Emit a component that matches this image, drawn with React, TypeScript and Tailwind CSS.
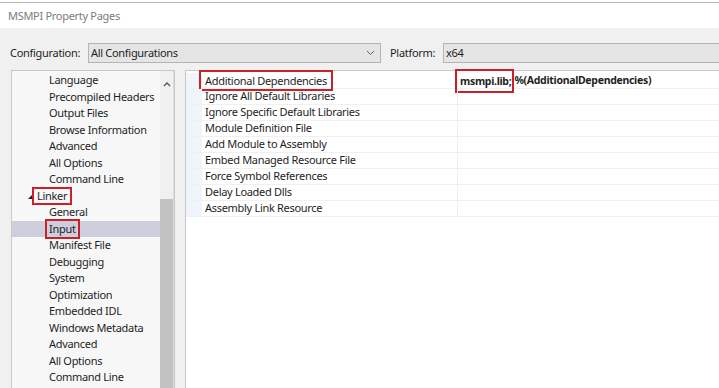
const treeItems: { label: string; level: number; selected?: boolean; boxed?: boolean; expander?: boolean }[] = [
  { label: "Language", level: 2 },
  { label: "Precompiled Headers", level: 2 },
  { label: "Output Files", level: 2 },
  { label: "Browse Information", level: 2 },
  { label: "Advanced", level: 2 },
  { label: "All Options", level: 2 },
  { label: "Command Line", level: 2 },
  { label: "Linker", level: 1, boxed: true, expander: true },
  { label: "General", level: 2 },
  { label: "Input", level: 2, selected: true, boxed: true },
  { label: "Manifest File", level: 2 },
  { label: "Debugging", level: 2 },
  { label: "System", level: 2 },
  { label: "Optimization", level: 2 },
  { label: "Embedded IDL", level: 2 },
  { label: "Windows Metadata", level: 2 },
  { label: "Advanced", level: 2 },
  { label: "All Options", level: 2 },
  { label: "Command Line", level: 2 },
];

const properties = [
  "Additional Dependencies",
  "Ignore All Default Libraries",
  "Ignore Specific Default Libraries",
  "Module Definition File",
  "Add Module to Assembly",
  "Embed Managed Resource File",
  "Force Symbol References",
  "Delay Loaded Dlls",
  "Assembly Link Resource",
];

const Chevron = () => (
  <svg width="9" height="6" viewBox="0 0 9 6" className="text-[#606060]">
    <path d="M1 1 L4.5 4.5 L8 1" fill="none" stroke="currentColor" strokeWidth="1" />
  </svg>
);

const App = () => {
  return (
    <div
      className="w-[719px] h-[388px] overflow-hidden bg-[#f0f0f0] flex flex-col text-[11px] tracking-[-0.3px] text-[#1e1e1e]"
      style={{ fontFamily: '"Noto Sans", "Open Sans", sans-serif' }}
    >
      <div className="h-[3px] bg-white border-b border-[#b8b8b8]" />
      <div className="h-[25px] bg-white flex items-center pl-[8px] pt-[2px] text-[#7c7c7c]">
        MSMPI Property Pages
      </div>

      {/* configuration row */}
      <div className="h-[42px] flex items-center pt-[8px]">
        <span className="ml-[10px] w-[78px] shrink-0 whitespace-nowrap">Configuration:</span>
        <div className="w-[293px] shrink-0 h-[20px] bg-[#e5e5e5] border border-[#b4b4b4] flex items-center justify-between pl-[2px] pr-[5px]">
          <span>All Configurations</span>
          <Chevron />
        </div>
        <span className="ml-[9px] w-[53px] shrink-0 whitespace-nowrap">Platform:</span>
        <div className="flex-1 h-[20px] bg-[#e5e5e5] border border-[#b4b4b4] border-r-0 flex items-center pl-[2px]">
          x64
        </div>
      </div>

      <div className="flex-1 flex min-h-0">
        {/* tree */}
        <div className="ml-[11px] w-[164px] bg-[#f7f7f7] border border-[#c8c8c8] border-b-0 flex min-h-0">
          <div className="flex-1 pt-[1px] min-w-0">
            {treeItems.map((it, i) => (
              <div
                key={i}
                className={`h-[16.5px] flex items-center ${it.selected ? "bg-[#cdcfdd]" : ""}`}
              >
                {it.level === 1 ? (
                  <div className="flex items-center pl-[16px]">
                    <svg width="4" height="4" viewBox="0 0 4 4" className="mt-[3px]">
                      <path d="M4 0 L4 4 L0 4 Z" fill="#1e1e1e" />
                    </svg>
                    <span className="whitespace-nowrap border-2 border-[#c9202a] px-[3px] leading-[14px]">
                      {it.label}
                    </span>
                  </div>
                ) : (
                  <div className="flex items-center pl-[37px]">
                    <span
                      className={`whitespace-nowrap leading-[16px] ${
                        it.boxed ? "border-2 border-[#c9202a] px-[2px] -ml-[4px] leading-[16px]" : ""
                      }`}
                    >
                      {it.label}
                    </span>
                  </div>
                )}
              </div>
            ))}
          </div>
          {/* scrollbar */}
          <div className="w-[14px] bg-[#f0f0f0] border-r border-[#dcdcdc] flex flex-col">
            <div className="h-[26px] flex items-center justify-center">
              <svg width="8" height="5" viewBox="0 0 8 5">
                <path d="M1 4 L4 1 L7 4" fill="none" stroke="#555" strokeWidth="1.4" />
              </svg>
            </div>
            <div className="h-[102px]" />
            <div className="flex-1 bg-[#c2c2c2]" />
          </div>
        </div>

        {/* property grid */}
        <div className="ml-[10px] flex-1 bg-white border-l border-t border-[#c8c8c8] pt-[2px]">
          {properties.map((p, i) => (
            <div key={i} className="h-[16px] flex border-b border-[#f0f0f0]">
              <div className="w-[16px] bg-[#f0f4fb]" />
              <div className="w-[256px] border-r border-[#f0f0f0] flex items-center pl-[3px] whitespace-nowrap">
                {i === 0 ? (
                  <span className="border-2 border-[#c9202a] px-[4px] -ml-[6px] leading-[17px]">{p}</span>
                ) : (
                  p
                )}
              </div>
              <div className="flex-1 flex items-center pl-[2px] font-bold text-[10.5px] whitespace-nowrap">
                {i === 0 && (
                  <>
                    <span className="border-2 border-[#c9202a] pl-[3px] pr-[1px] -ml-[5px] leading-[20px]">msmpi.lib;</span>
                    <span>%(AdditionalDependencies)</span>
                  </>
                )}
              </div>
            </div>
          ))}
        </div>
      </div>
    </div>
  );
};

export default App;
